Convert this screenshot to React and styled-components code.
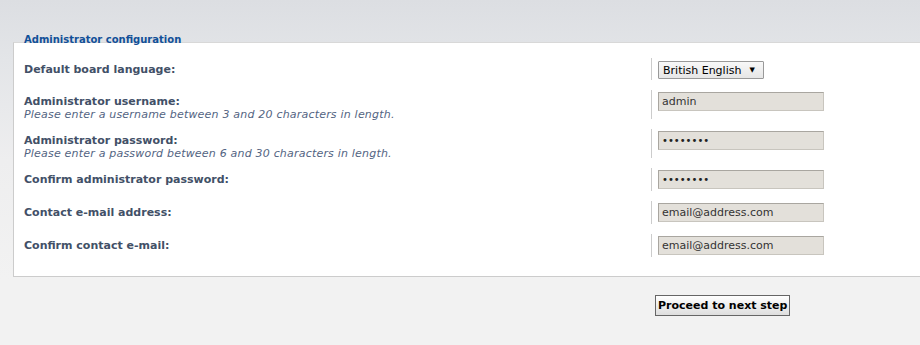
import React from "react";
import styled, { createGlobalStyle } from "styled-components";

const Global = createGlobalStyle`
  html, body { margin: 0; padding: 0; }
  body {
    background: linear-gradient(to bottom, #dcdee2 0px, #e3e5e8 60px, #eeeeef 160px, #f2f2f2 280px, #f2f2f2 100%);
    min-height: 345px;
    font-family: "DejaVu Sans", Verdana, sans-serif;
    overflow: hidden;
  }
`;

const Page = styled.div`
  padding: 33px 0 0 13px;
  width: 907px;
  height: 312px;
`;

const Legend = styled.div`
  position: relative;
  z-index: 1;
  padding-left: 11px;
  font-size: 10px;
  font-weight: bold;
  line-height: 13px;
  color: #115098;
  margin-bottom: -4px;
`;

const Panel = styled.div`
  background: #fff;
  border-left: 1px solid #cccccc;
  border-top: 1px solid #d8d8d8;
  border-bottom: 1px solid #cccccc;
  padding: 15px 0 19px 10px;
`;

const Row = styled.div`
  display: flex;
  align-items: stretch;
  & + & { margin-top: 10px; }
`;

const Term = styled.div`
  width: 627px;
  flex: none;
  padding-top: 5px;
  margin-bottom: ${(p) => (p.$explain ? -2 : 0)}px;
`;

const Label = styled.div`
  font-size: 11px;
  font-weight: bold;
  line-height: 13px;
  color: #425067;
`;

const Explain = styled.div`
  font-size: 11px;
  font-style: italic;
  line-height: 13px;
  letter-spacing: 0.2px;
  color: #536482;
`;

const Field = styled.div`
  border-left: 1px solid #cccccc;
  padding: 2px 0 2px 6px;
  display: flex;
  align-items: flex-start;
`;

const Input = styled.div`
  box-sizing: border-box;
  width: 166px;
  height: 19px;
  background: #e3e0da;
  border: 1px solid #c8c5be;
  border-top-color: #a9a6a0;
  border-left-color: #a9a6a0;
  font-size: 11px;
  line-height: 17px;
  padding-left: 3px;
  color: #333;
`;

const Dots = styled.span`
  font-size: 10px;
  color: #222;
`;

const Select = styled.div`
  box-sizing: border-box;
  margin: 1px 0 -1px;
  height: 18px;
  width: 106px;
  display: flex;
  align-items: center;
  gap: 8px;
  padding-left: 4px;
  border: 1px solid #999;
  border-radius: 1px;
  background: linear-gradient(to bottom, #f8f8f8, #e6e6e6);
  font-size: 11px;
  color: #000;
`;

const Arrow = styled.span`
  font-size: 7px;
`;

const Actions = styled.div`
  padding: 17px 0 0 642px;
`;

const Button = styled.button`
  font-family: "DejaVu Sans", Verdana, sans-serif;
  font-size: 11px;
  font-weight: bold;
  color: #000;
  height: 21px;
  padding: 0 2px;
  border: 1px solid #666;
  background: linear-gradient(to bottom, #ffffff, #dedede);
  line-height: 17px;
`;

const rows = [
  { label: "Default board language:", kind: "select" },
  { label: "Administrator username:", explain: "Please enter a username between 3 and 20 characters in length.", value: "admin" },
  { label: "Administrator password:", explain: "Please enter a password between 6 and 30 characters in length.", pw: true },
  { label: "Confirm administrator password:", pw: true },
  { label: "Contact e-mail address:", value: "email@address.com" },
  { label: "Confirm contact e-mail:", value: "email@address.com" },
];

export default function App() {
  return (
    <>
      <Global />
      <Page>
        <Legend>Administrator configuration</Legend>
        <Panel>
          {rows.map((r, i) => (
            <Row key={i}>
              <Term $explain={!!r.explain}>
                <Label>{r.label}</Label>
                {r.explain && <Explain>{r.explain}</Explain>}
              </Term>
              <Field>
                {r.kind === "select" ? (
                  <Select>
                    British English <Arrow>▼</Arrow>
                  </Select>
                ) : (
                  <Input>{r.pw ? <Dots>••••••••</Dots> : r.value}</Input>
                )}
              </Field>
            </Row>
          ))}
        </Panel>
        <Actions>
          <Button>Proceed to next step</Button>
        </Actions>
      </Page>
    </>
  );
}
